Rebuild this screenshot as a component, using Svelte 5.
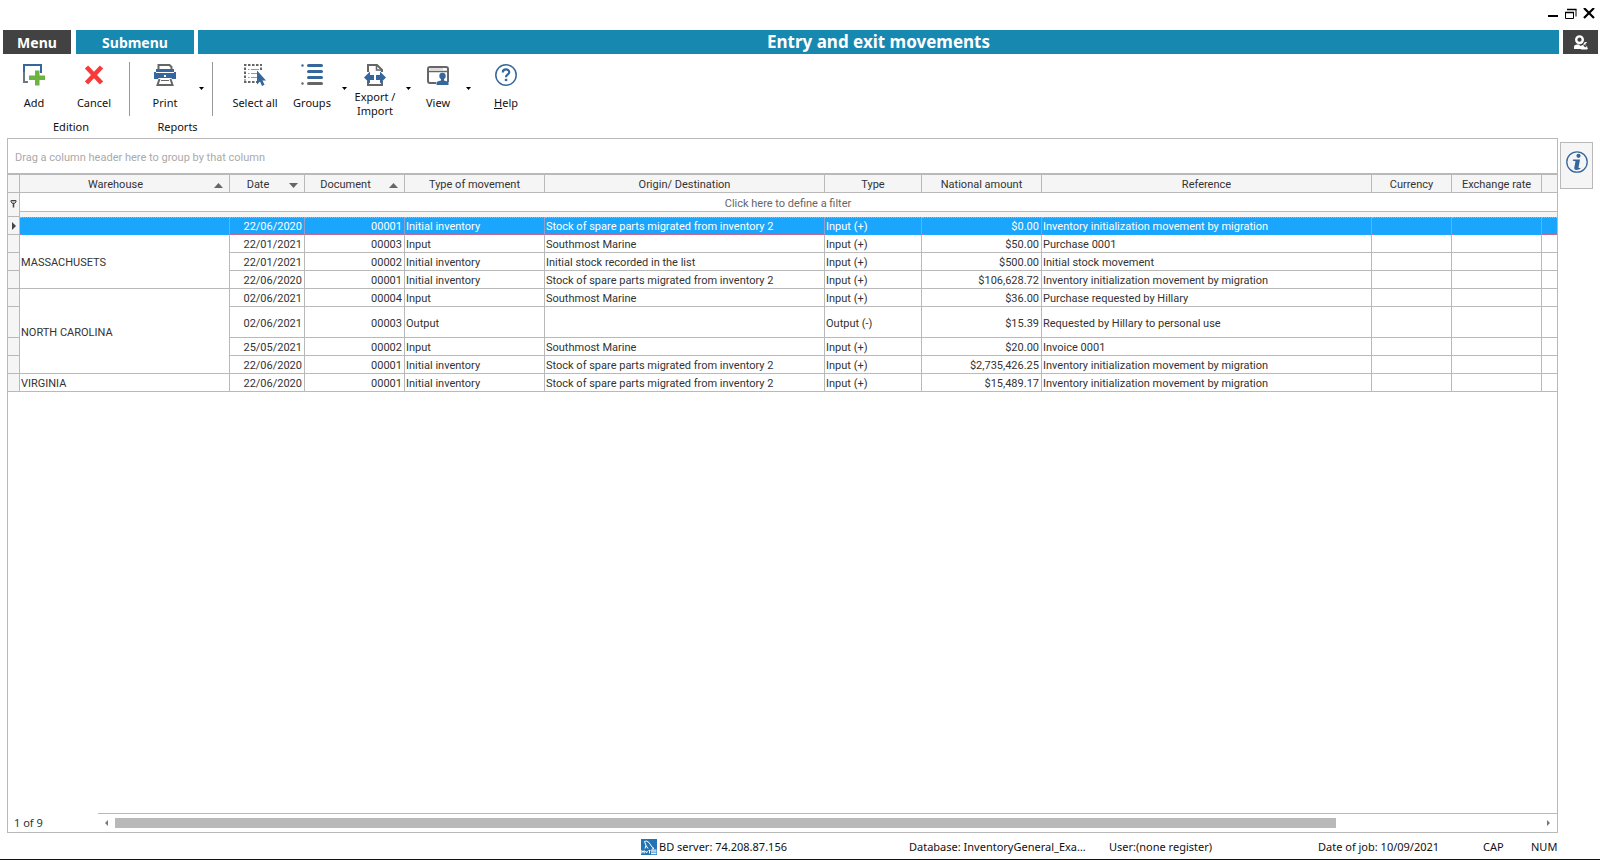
<script>
  const columns = [
    { name: 'Warehouse', width: 210, sort: 'up' },
    { name: 'Date', width: 75, sort: 'down' },
    { name: 'Document', width: 100, sort: 'up' },
    { name: 'Type of movement', width: 140 },
    { name: 'Origin/ Destination', width: 280 },
    { name: 'Type', width: 97 },
    { name: 'National amount', width: 120 },
    { name: 'Reference', width: 330 },
    { name: 'Currency', width: 80 },
    { name: 'Exchange rate', width: 90 }
  ];

  const stock = 'Stock of spare parts migrated from inventory 2';
  const migration = 'Inventory initialization movement by migration';
  const rows = [
    { warehouse: '', span: 1, date: '22/06/2020', doc: '00001', kind: 'Initial inventory', origin: stock, type: 'Input (+)', amount: '$0.00', ref: migration, selected: true },
    { warehouse: 'MASSACHUSETS', span: 3, date: '22/01/2021', doc: '00003', kind: 'Input', origin: 'Southmost Marine', type: 'Input (+)', amount: '$50.00', ref: 'Purchase 0001' },
    { date: '22/01/2021', doc: '00002', kind: 'Initial inventory', origin: 'Initial stock recorded in the list', type: 'Input (+)', amount: '$500.00', ref: 'Initial stock movement' },
    { date: '22/06/2020', doc: '00001', kind: 'Initial inventory', origin: stock, type: 'Input (+)', amount: '$106,628.72', ref: migration },
    { warehouse: 'NORTH CAROLINA', span: 4, date: '02/06/2021', doc: '00004', kind: 'Input', origin: 'Southmost Marine', type: 'Input (+)', amount: '$36.00', ref: 'Purchase requested by Hillary' },
    { date: '02/06/2021', doc: '00003', kind: 'Output', origin: '', type: 'Output (-)', amount: '$15.39', ref: 'Requested by Hillary to personal use', tall: true },
    { date: '25/05/2021', doc: '00002', kind: 'Input', origin: 'Southmost Marine', type: 'Input (+)', amount: '$20.00', ref: 'Invoice 0001' },
    { date: '22/06/2020', doc: '00001', kind: 'Initial inventory', origin: stock, type: 'Input (+)', amount: '$2,735,426.25', ref: migration },
    { warehouse: 'VIRGINIA', span: 1, date: '22/06/2020', doc: '00001', kind: 'Initial inventory', origin: stock, type: 'Input (+)', amount: '$15,489.17', ref: migration }
  ];
</script>

{#snippet dropArrow(label, wide)}
  <button class="drop" class:wide aria-label={label}>
    <svg width="5" height="3" viewBox="0 0 5 3"><path d="M0 0h5L2.5 3z" fill="#000" /></svg>
  </button>
{/snippet}

<div class="app">
  <header class="window-bar">
    <button aria-label="Minimize"><svg width="12" height="12" viewBox="0 0 12 12"><path d="M1 8h10" stroke="#000" stroke-width="2" /></svg></button>
    <button aria-label="Restore"><svg width="12" height="12" viewBox="0 0 12 12"><path d="M.5 4.500h8v6h-8z M2.500 1.500h8.500v7" fill="none" stroke="#000" /><path d="M0 4.500h9M2 1.500h9.500" stroke="#000" stroke-width="1.500" /></svg></button>
    <button aria-label="Close"><svg width="12" height="12" viewBox="0 0 12 12"><path d="M1 0l10 10M11 0L1 10" stroke="#000" stroke-width="2.200" /></svg></button>
  </header>

  <nav class="menu-bar">
    <button class="menu">Menu</button>
    <button class="submenu">Submenu</button>
    <h1>Entry and exit movements</h1>
    <button class="settings" aria-label="Settings">
      <svg width="14" height="15" viewBox="0 0 14 15">
        <circle cx="5.500" cy="4.700" r="3.300" fill="none" stroke="#fff" stroke-width="2.400" />
        <path d="M0 14V11.500C0 10 2 9.500 5 9.500L9 14z" fill="#fff" />
        <path d="M13.300 7.600A2.500 2.500 0 1 0 13.500 11.500L11.500 10.500 11.300 8.700z M6 11l4.500-1.500 3.500 3.700-1 1.300H7z" fill="#fff" />
      </svg>
    </button>
  </nav>

  <div class="toolbar">
    <section class="group edition">
      <div class="tools">
        <button class="tool">
          <svg width="22" height="22" viewBox="0 0 22 22"><path d="M18 9V1H1v17h4" fill="none" stroke="#36679c" stroke-width="2" /><path d="M1 8v10h4" fill="none" stroke="#6b7783" stroke-width="2" /><path d="M12 6.500h4.500v5H22V16h-5.500v5.500H12V16H6v-4.500h6z" fill="#6cb33f" /></svg>
          <span>Add</span>
        </button>
        <button class="tool">
          <svg width="22" height="22" viewBox="0 0 22 22"><path d="M3.500 3l15 16M18.500 3L3.500 19" stroke="#f93a3a" stroke-width="4.500" /></svg>
          <span>Cancel</span>
        </button>
      </div>
      <h2>Edition</h2>
    </section>
    <section class="group reports">
      <div class="tools">
        <button class="tool">
          <svg width="22" height="22" viewBox="0 0 22 22">
            <path d="M4.500 5V1h11L17.500 3v2" fill="none" stroke="#666" stroke-width="2" />
            <path d="M2 5h18v3h2v7h-4l-1.500-3.500h-11L4 15H0V8h2z" fill="#36679c" />
            <path d="M2 8.500h18" stroke="#fff" />
            <path d="M4 11h14v3H4z" fill="#36679c" /><path d="M10 11h2v2h-2z" fill="#fff" />
            <path d="M5.500 15L3.500 21h15L16.500 15" fill="none" stroke="#666" stroke-width="2" /><path d="M7 16.500h8" stroke="#666" />
          </svg>
          <span>Print</span>
        </button>
        {@render dropArrow('Print options', false)}
      </div>
      <h2>Reports</h2>
    </section>
    <section class="group general">
      <div class="tools">
        <button class="tool select">
          <svg width="22" height="22" viewBox="0 0 22 22">
            <path d="M0 1h18M0 18h13" stroke="#666" stroke-width="2" stroke-dasharray="2.500 1.500" />
            <path d="M1 3.500v13M17 3.500v4" stroke="#666" stroke-width="2" stroke-dasharray="2.500 1.500" />
            <path d="M4 5.500h1.500M7 5.500h8M4 9.500h1.500M7 9.500h6M4 13.500h1.500M7 13.500h6" stroke="#999" />
            <path d="M13 6.500v14l3-3 2 4.500 2.500-1.200-2-4.300H22z" fill="#36679c" />
          </svg>
          <span>Select all</span>
        </button>
        <button class="tool groups">
          <svg width="22" height="22" viewBox="0 0 22 22">
            <path d="M7.500 1.500h13M7.500 7.500h13M7.500 13.500h13" stroke="#36679c" stroke-width="3" stroke-linecap="round" />
            <path d="M7.500 19.500h13" stroke="#666" stroke-width="3" stroke-linecap="round" />
            <circle cx="1.500" cy="1.500" r="1.200" fill="#36679c" /><circle cx="1.500" cy="19.500" r="1.200" fill="#666" />
          </svg>
          <span>Groups</span>
        </button>
        {@render dropArrow('Groups options', false)}
        <button class="tool export">
          <svg width="22" height="22" viewBox="0 0 22 22">
            <path d="M4 8V1h9l5 5v2M4 17v4h14v-4" fill="none" stroke="#666" stroke-width="2" /><path d="M12.500 1v5H18" fill="none" stroke="#666" stroke-width="1.500" />
            <path d="M0 13.500L6 7.500V11h4v5H6v3.500zM22 13.500L16 7.500V11h-4v5h4v3.500z" fill="#36679c" />
          </svg>
          <span class="two-line">Export / Import</span>
        </button>
        {@render dropArrow('Export and import options', true)}
        <button class="tool view">
          <svg width="22" height="22" viewBox="0 0 22 22">
            <path d="M9 19H3q-2 0-2-2V5q0-2 2-2h16q2 0 2 2v13" fill="none" stroke="#666" stroke-width="2" /><path d="M1 7.500h20" stroke="#666" stroke-width="1.500" /><path d="M3 5h13" stroke="#bbb" />
            <circle cx="15.500" cy="12" r="3.200" fill="#36679c" /><path d="M9.500 21v-2.500q0-1 4.500-2V14h3v2.500q4.500 1 4.500 2V21z" fill="#36679c" />
          </svg>
          <span>View</span>
        </button>
        {@render dropArrow('View options', true)}
        <button class="tool">
          <svg width="22" height="22" viewBox="0 0 22 22">
            <circle cx="11" cy="11" r="10.200" fill="none" stroke="#36679c" stroke-width="1.500" />
            <path d="M7.800 8.500C7.800 4.500 14.200 4.500 14.200 8.200C14.200 10.500 11 10.500 11 13.200" fill="none" stroke="#36679c" stroke-width="2.200" /><path d="M9.800 14.800h2.500v2.300H9.800z" fill="#36679c" />
          </svg>
          <span><u>H</u>elp</span>
        </button>
      </div>
    </section>
  </div>

  <main>
    <div class="grid">
      <p class="group-panel">Drag a column header here to group by that column</p>
      <div class="table-area">
        <table>
          <colgroup>
            <col style="width: 12px" />
            {#each columns as c}<col style="width: {c.width}px" />{/each}
            <col />
          </colgroup>
          <thead>
            <tr>
              <th></th>
              {#each columns as c}
                <th scope="col">
                  <div class="head">
                    <span>{c.name}</span>
                    {#if c.sort}
                      <svg width="18" height="5" viewBox="0 0 18 5"><path d={c.sort === 'up' ? 'M3 5h9L7.500 0z' : 'M3 0h9L7.500 5z'} fill="#666" /></svg>
                    {/if}
                  </div>
                </th>
              {/each}
              <th></th>
            </tr>
          </thead>
          <tbody>
            <tr class="filter">
              <td class="mark" rowspan="2"><svg width="7" height="9" viewBox="0 0 7 9"><path d="M1 1.500h5v1.500L4.500 4.500h-2L1 3z" fill="#bbb" stroke="#444" /><path d="M3.500 4v4.500" stroke="#444" stroke-width="1.500" /></svg></td>
              <td colspan="11"><button>Click here to define a filter</button></td>
            </tr>
            <tr class="gap"><td colspan="11"></td></tr>
            {#each rows as r}
              <tr class:selected={r.selected} class:tall={r.tall}>
                <td class="mark">{#if r.selected}<svg width="4" height="8" viewBox="0 0 4 8"><path d="M0 0l4 4-4 4z" fill="#444" /></svg>{/if}</td>
                {#if r.span}<td rowspan={r.span}>{r.warehouse}</td>{/if}
                <td class="num">{r.date}</td>
                <td class="num">{r.doc}</td>
                <td>{r.kind}</td>
                <td>{r.origin}</td>
                <td>{r.type}</td>
                <td class="num">{r.amount}</td>
                <td>{r.ref}</td>
                <td></td>
                <td></td>
                <td></td>
              </tr>
            {/each}
          </tbody>
        </table>
      </div>
      <div class="pager">
        <span>1 of 9</span>
        <div class="scroll">
          <button aria-label="Scroll left"><svg width="3" height="6" viewBox="0 0 3 6"><path d="M3 0v6L0 3z" fill="#777" /></svg></button>
          <div class="track"><div class="thumb"></div></div>
          <button aria-label="Scroll right"><svg width="3" height="6" viewBox="0 0 3 6"><path d="M0 0v6l3-3z" fill="#777" /></svg></button>
        </div>
      </div>
    </div>
    <button class="info" aria-label="Information">
      <svg width="22" height="22" viewBox="0 0 22 22">
        <circle cx="11" cy="11" r="10.200" fill="none" stroke="#36679c" stroke-width="1.300" />
        <circle cx="12.500" cy="4.800" r="2.100" fill="#36679c" />
        <path d="M7 8.500h7L12.500 16.500q0 .8 2 .2l-.3 1.300q-6 2.200-6-.7L9.500 10.200 6.800 9.800z" fill="#36679c" />
      </svg>
    </button>
  </main>

  <footer>
    <span class="server">
      <svg width="16" height="16" viewBox="0 0 16 16">
        <rect width="16" height="16" fill="#2374b4" />
        <path d="M4 9.500L5 6.500 3.500 2.500Q5 1 8 3.500L11 8l2 1.500-2 .5M5 6.500l2 3" fill="none" stroke="#fff" />
        <path d="M.8 14.500v-3l1.200 1.700 1.200-1.700v3M4.500 12l1 2 1-2M7.500 11.500h2M8.500 11.500v3" fill="none" stroke="#fff" />
        <path d="M10 10.500h5.500v1.300H10zM10 12.300h5.500v1.200H10zM10 14h5.500v1.300H10z" fill="#e6eef5" />
      </svg>
      BD server: 74.208.87.156
    </span>
    <span class="database">Database: InventoryGeneral_Exa…</span>
    <span class="user">User:(none register)</span>
    <span class="job">Date of job: 10/09/2021</span>
    <span class="cap">CAP</span>
    <span class="lock">NUM</span>
  </footer>
</div>

<style>
  :global(body) { background: #fff; }
  .app {
    display: flex;
    flex-direction: column;
    box-sizing: border-box;
    min-height: 100vh;
    border-bottom: 1px solid #111;
    font: 11px/14px "Noto Sans", sans-serif;
    color: #111;
  }
  button {
    margin: 0;
    padding: 0;
    border: 0;
    background: none;
    color: inherit;
    font: inherit;
  }
  svg { display: block; flex: none; }

  .window-bar {
    display: flex;
    justify-content: flex-end;
    gap: 6px;
    height: 22px;
    padding: 8px 5px 0 0;
    box-sizing: border-box;
    margin-bottom: 8px;
  }
  .window-bar button { display: flex; }

  .menu-bar {
    display: flex;
    gap: 4px;
    height: 24px;
    padding: 0 2px 0 3px;
    color: #fff;
    font-size: 14px;
    font-weight: 700;
  }
  .menu-bar button { padding-top: 1px; }
  .menu { width: 68px; background: #424242; }
  .submenu { width: 118px; margin-left: 1px; background: #1788b0; }
  h1 {
    flex: 1;
    margin: 0;
    background: #1788b0;
    font-size: 17px;
    line-height: 24px;
    text-align: center;
  }
  .settings { display: flex; align-items: center; justify-content: center; width: 35px; background: #424242; }

  .toolbar { display: flex; height: 76px; padding-top: 8px; }
  .tools { display: flex; height: 54px; }
  .group h2 {
    margin: 4px 0 0;
    padding-left: 12px;
    font-size: 11px;
    line-height: 14px;
    font-weight: 400;
    text-align: center;
  }
  .edition .tools { padding: 0 5px 0 4px; border-right: 1px solid #999; }
  .reports .tools { padding: 0 5px; border-right: 1px solid #999; }
  .general { padding-left: 11px; }
  .tool {
    display: flex;
    flex-direction: column;
    align-items: center;
    width: 60px;
    padding-top: 2px;
  }
  .tool span { margin-top: 10px; white-space: nowrap; }
  .tool .two-line { width: 44px; margin-top: 4px; white-space: normal; }
  .tool.select { width: 62px; }
  .tool.groups { width: 52px; }
  .tool.export { width: 50px; }
  .tool.view { width: 44px; }
  .drop { display: flex; justify-content: center; width: 12px; padding-top: 25px; }
  .drop.wide { width: 16px; }

  main { display: flex; flex: 1; gap: 2px; padding: 0 7px; }
  .grid {
    display: flex;
    flex: 1;
    flex-direction: column;
    min-width: 0;
    border: 1px solid #b9b9b9;
    color: #333;
    font-family: Roboto, sans-serif;
  }
  .group-panel { margin: 0; padding: 4px 7px 0; line-height: 30px; color: #aaa; }
  .table-area { flex: 1; overflow: hidden; border-top: 2px solid #b9b9b9; }
  table { width: 100%; table-layout: fixed; border-collapse: separate; border-spacing: 0; }
  th, td {
    box-sizing: border-box;
    height: 18px;
    padding: 3px 2px 0 1px;
    border-right: 1px solid #b9b9b9;
    border-bottom: 1px solid #b9b9b9;
    overflow: hidden;
    line-height: 14px;
    font-weight: 400;
    text-align: left;
    white-space: nowrap;
  }
  th:last-child, td:last-child { border-right: 0; }
  th { padding: 3px 0 0; background: #f5f5f5; }
  .mark { padding: 0; background: #f5f5f5; }
  .head { display: flex; align-items: center; text-align: center; }
  .head span { flex: 1; }
  .num { text-align: right; }
  .mark svg { margin: 0 auto; }
  .filter td { height: 19px; }
  .filter .mark { padding-bottom: 2px; }
  .filter button { display: block; width: 100%; color: #666; line-height: 14px; }
  .gap td { height: 5px; padding: 0; border-bottom: 0; background: #f5f5f5; }
  .tall td { height: 31px; }
  .selected td:not(.mark) {
    padding-top: 2px;
    background: #1aa6fc;
    border-top: 1px dotted #e89aa8;
    border-right-color: #8f9fce;
    border-bottom: 1px dotted #c86e96;
    color: #fff;
  }

  .pager { display: flex; height: 19px; line-height: 19px; }
  .pager > span { width: 84px; padding-left: 6px; font-family: "Noto Sans", sans-serif; }
  .scroll { display: flex; flex: 1; border-top: 1px solid #b9b9b9; }
  .scroll button { display: flex; align-items: center; justify-content: center; width: 17px; }
  .track { flex: 1; padding: 4px 0; }
  .thumb { width: calc(100% * 6 / 7); height: 10px; background: #b9b9b9; }
  .info {
    display: flex;
    justify-content: center;
    box-sizing: border-box;
    width: 33px;
    height: 47px;
    margin-top: 4px;
    padding-top: 8px;
    border: 1px solid #b9b9b9;
    background: #f5f5f5;
  }

  footer { display: flex; justify-content: flex-end; height: 26px; line-height: 27px; white-space: nowrap; }
  .server { display: flex; align-items: center; gap: 2px; width: 268px; }
  .server svg { margin-top: 2px; }
  .database { width: 200px; }
  .user { width: 209px; }
  .job { width: 165px; }
  .cap { width: 48px; }
  .lock { width: 69px; }
</style>
